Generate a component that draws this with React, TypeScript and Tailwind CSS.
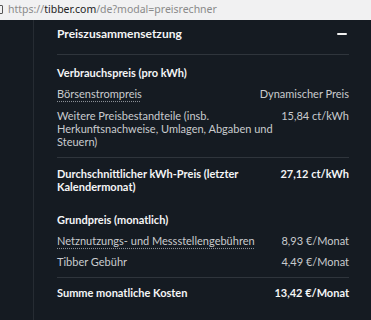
import React from "react"

const font = { fontFamily: "Lato, 'Noto Sans', sans-serif" }

function Row({ label, value, dotted = false }: { label: React.ReactNode; value: string; dotted?: boolean }) {
  return (
    <div className="flex justify-between gap-2 text-[11px] leading-[13px] text-[#c9cbce]">
      <span className={`max-w-[220px] ${dotted ? "underline decoration-dotted decoration-[#8a8f95] underline-offset-[3px]" : ""}`}>{label}</span>
      <span className="shrink-0 text-right">{value}</span>
    </div>
  )
}

function BoldRow({ label, value }: { label: React.ReactNode; value: string }) {
  return (
    <div className="flex justify-between gap-2 text-[11px] leading-[13px] font-bold text-[#f4f5f6]">
      <span className="max-w-[200px]">{label}</span>
      <span className="shrink-0 text-right">{value}</span>
    </div>
  )
}

export default function App() {
  return (
    <div className="h-screen flex flex-col bg-[#151b22] overflow-hidden" style={font}>
      <div className="h-[20px] shrink-0 bg-[#f1f1f2] flex items-center pl-[8px] text-[10.5px] relative" style={{ fontFamily: "'Noto Sans', sans-serif" }}>
        <span className="absolute left-[-4px] top-[5px] w-[7px] h-[9px] border border-[#555] rounded-[1px]" />
        <span className="text-[#8a8a8a]">https://</span>
        <span className="text-[#222]">tibber.com</span>
        <span className="text-[#8a8a8a]">/de?modal=preisrechner</span>
      </div>
      <div className="flex-1 flex">
        <div className="w-[34px] shrink-0 border-r border-[#262c33]" />
        <div className="flex-1 pl-[23px] pr-[22px]">
          <div className="flex items-center justify-between pt-[7px] pb-[13px] border-b border-[#2f353c]">
            <span className="text-[12px] leading-[14px] font-bold text-[#f4f5f6]">Preiszusammensetzung</span>
            <span className="w-[10px] h-[2px] mr-[2px] bg-[#f0f0f0] rounded" />
          </div>
          <div className="pt-[11px] pb-[9px] border-b border-[#2f353c]">
            <div className="text-[11px] leading-[13px] font-bold text-[#f4f5f6]">Verbrauchspreis (pro kWh)</div>
            <div className="mt-[8px]">
              <Row label="Börsenstrompreis" value="Dynamischer Preis" dotted />
            </div>
            <div className="mt-[9px]">
              <Row label="Weitere Preisbestandteile (insb. Herkunftsnachweise, Umlagen, Abgaben und Steuern)" value="15,84 ct/kWh" />
            </div>
          </div>
          <div className="pt-[9px]">
            <BoldRow label="Durchschnittlicher kWh-Preis (letzter Kalendermonat)" value="27,12 ct/kWh" />
          </div>
          <div className="pt-[20px] pb-[9px] border-b border-[#2f353c]">
            <div className="text-[11px] leading-[13px] font-bold text-[#f4f5f6]">Grundpreis (monatlich)</div>
            <div className="mt-[8px]">
              <Row label="Netznutzungs- und Messstellengebühren" value="8,93 €/Monat" dotted />
            </div>
            <div className="mt-[8px]">
              <Row label="Tibber Gebühr" value="4,49 €/Monat" />
            </div>
          </div>
          <div className="pt-[8px]">
            <BoldRow label="Summe monatliche Kosten" value="13,42 €/Monat" />
          </div>
        </div>
      </div>
    </div>
  )
}
